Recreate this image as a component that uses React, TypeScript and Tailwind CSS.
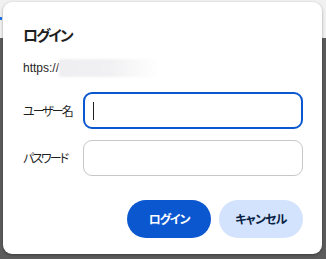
export default function App() {
  const font = { fontFamily: '"Noto Sans CJK JP", "Noto Sans", sans-serif' }
  return (
    <div className="relative w-[326px] h-[259px] overflow-hidden [font-feature-settings:'palt']" style={font}>
      {/* browser behind the dialog */}
      <div className="flex flex-col h-full">
        <div className="h-[38px] bg-[#f1f1f1] relative">
          <div className="absolute left-0 top-[17px] w-[2px] h-[3px] bg-[#1a73e8]" />
        </div>
        <div className="flex-1 bg-[#5c5c5c]" />
      </div>

      {/* auth dialog */}
      <div className="absolute left-[3px] top-[2px] w-[319px] h-[252px] bg-white rounded-[9px] shadow-[0_1px_3px_rgba(0,0,0,0.35)] pl-[20px] pr-[19px] pt-[22px] flex flex-col">
        <h1 className="text-[15px] leading-[22px] font-bold text-[#1f1f1f] tracking-[-2px]">ログイン</h1>
        <div className="flex items-center mt-[12px] h-[20px]">
          <span className="text-[12px] text-[#1f1f1f]" style={{ fontFamily: '"Liberation Sans", Arial, sans-serif' }}>https://</span>
          <div className="h-[18px] w-[100px] bg-gradient-to-r from-[#efeff2] via-[#f1f1f3] to-white blur-[1px]" />
        </div>

        <div className="flex items-center mt-[14px]">
          <label className="w-[60px] text-[12px] text-[#1f1f1f] tracking-[-2px]">ユーザー名</label>
          <div className="flex-1 h-[37px] rounded-[9px] border-2 border-[#0b57d0] flex items-center pl-[8px]">
            <div className="w-[1px] h-[18px] bg-[#1f1f1f]" />
          </div>
        </div>

        <div className="flex items-center mt-[11px]">
          <label className="w-[60px] text-[12px] text-[#1f1f1f] tracking-[-2px]">パスワード</label>
          <div className="flex-1 h-[36px] rounded-[9px] border border-[#c7c7c7]" />
        </div>

        <div className="flex justify-end gap-[8px] mt-[24px]">
          <button className="w-[84px] h-[38px] rounded-full bg-[#0b57d0] text-white text-[12px] font-semibold tracking-[-1.2px]">ログイン</button>
          <button className="w-[84px] h-[38px] rounded-full bg-[#d3e3fd] text-[#0a1f44] text-[12px] font-semibold tracking-[-0.8px]">キャンセル</button>
        </div>
      </div>
    </div>
  )
}
